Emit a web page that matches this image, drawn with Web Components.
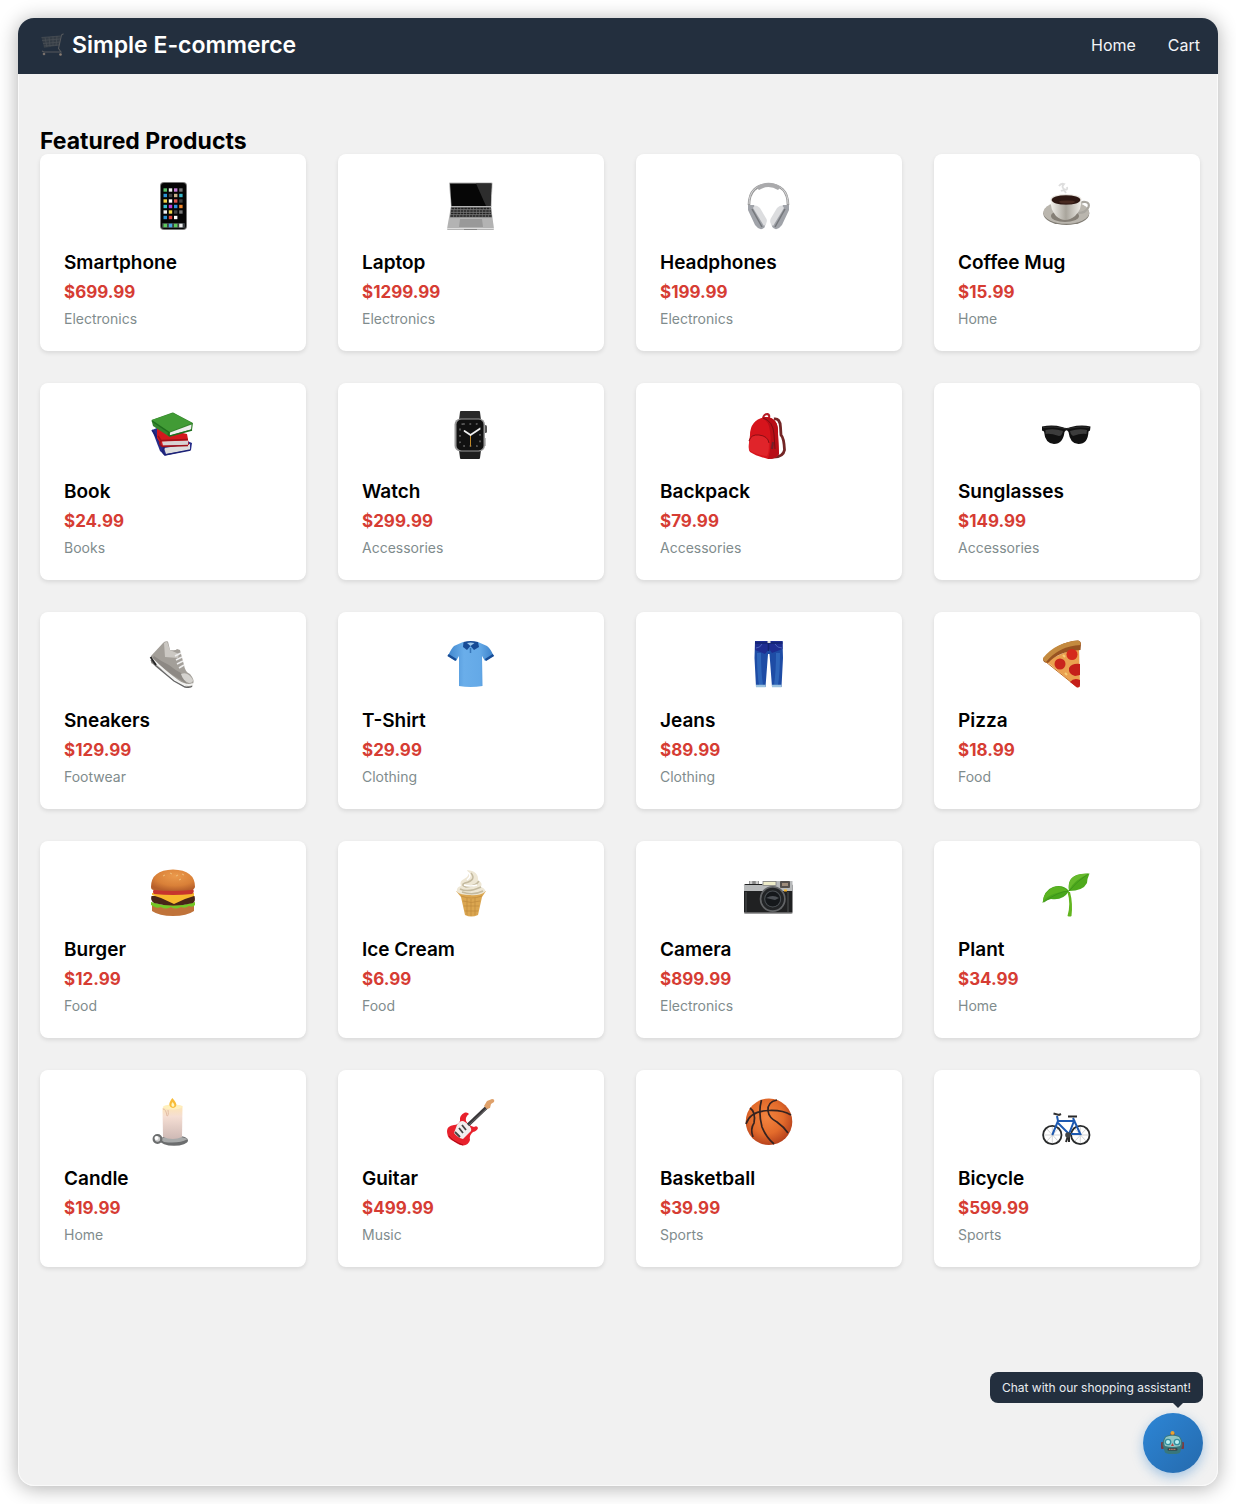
<!DOCTYPE html>
<html lang="en">
<head>
<meta charset="UTF-8">
<meta name="viewport" content="width=device-width, initial-scale=1.0">
<title>Simple E-commerce</title>
<style>
    * { box-sizing: border-box; }
    body {
        margin: 0;
        background: #fff;
        font-family: Inter, "Liberation Sans", sans-serif;
        color: #000;
    }
</style>
</head>
<body>
<shop-window>
    <shop-header slot="header">
        Simple E-commerce
        <a slot="nav" href="#home">Home</a>
        <a slot="nav" href="#cart">Cart</a>
    </shop-header>
    <product-grid heading="Featured Products"></product-grid>
    <chat-launcher slot="chat">Chat with our shopping assistant!</chat-launcher>
</shop-window>

<script>
// Icon drawings, all on a 56x56 canvas
const ICONS = {
    phone: `
        <rect x="15" y="4" width="27" height="48" rx="4" fill="#777"/>
        <rect x="16" y="5" width="25" height="46" rx="3" fill="#050505"/>
        <g stroke-width="3.4" fill="none">
            <path d="M18.5 12H22" stroke="#55c267"/><path d="M23.8 12H27.2" stroke="#eee"/><path d="M29 12H32.4" stroke="#c37bd5"/><path d="M34.2 12H37.6" stroke="#777"/>
            <path d="M18.5 17.5H22" stroke="#2a94d6"/><path d="M23.8 17.5H27.2" stroke="#444"/><path d="M29 17.5H32.4" stroke="#c9b188"/><path d="M34.2 17.5H37.6" stroke="#37b6c9"/>
            <path d="M18.5 23H22" stroke="#f0d648"/><path d="M23.8 23H27.2" stroke="#fff"/><path d="M29 23H32.4" stroke="#e0524a"/><path d="M34.2 23H37.6" stroke="#444"/>
            <path d="M18.5 28.5H22" stroke="#38bfd0"/><path d="M23.8 28.5H27.2" stroke="#c03bd0"/><path d="M29 28.5H32.4" stroke="#2c8fe0"/><path d="M34.2 28.5H37.6" stroke="#f0862a"/>
            <path d="M18.5 34H22" stroke="#eee"/><path d="M23.8 34H27.2" stroke="#f0d648"/><path d="M29 34H32.4" stroke="#444"/><path d="M34.2 34H37.6" stroke="#777"/>
            <path d="M18.5 39.5H22" stroke="#2c8fd0"/><path d="M23.8 39.5H27.2" stroke="#e0443c"/><path d="M29 39.5H32.4" stroke="#fff"/>
        </g>
        <rect x="17" y="45" width="23" height="5" rx="1" fill="#3a3f42"/>
        <path d="M18.5 47.5H22M29 47.5H32.4" stroke="#5ccb5c" stroke-width="3.6"/><path d="M23.8 47.5H27.2" stroke="#46a5e6" stroke-width="3.6"/><path d="M34.2 47.5H37.6" stroke="#eee" stroke-width="3.6"/>`,
    laptop: `
        <path d="M6 5Q6 4.5 7 4.5H48.5Q49.5 4.5 49.5 5.5L48.5 29H8Z" fill="#b5b5b5"/>
        <path d="M7 5.5H48.5L47.5 28H8.5Z" fill="#060606"/>
        <path d="M33 5.5H48.5L47.5 28H43Z" fill="#2d2d2d"/>
        <path d="M8 28H48L51 51Q51 52 50 52H5Q4 52 4 51Z" fill="#b3b3b3"/>
        <path d="M8 29H48L49 39.5H7Z" fill="#777"/>
        <path d="M8.5 30.5H47.5M8 33H48M8 35.5H48M7.5 38H48.5" stroke="#222" stroke-width="1.5" stroke-dasharray="2.6 .6"/>
        <path d="M17 41H39L40 49H16Z" fill="#999"/>
        <path d="M4 50.5H51" stroke="#ddd"/><path d="M21 51.5H34" stroke="#888"/>`,
    headphones: `
        <path d="M8 27C8 13 16 6.5 27.500 6.5S47 13 47 27" fill="none" stroke="#999" stroke-width="2.6"/>
        <path d="M8 26C8 13 16 6 27.5 6S47 13 47 26" fill="none" stroke="#d8d8da" stroke-width="1"/>
        <path d="M15 9Q27.5 .5 40 9L37 12Q27.5 6 18 12Z" fill="#aaaaac"/>
        <path d="M7 27L13 27L24 44Q25.5 50 20 51.3Q17 51 14 47L7 32Z" fill="#a0a3a9"/>
        <path d="M12 30Q14 25 19 30L25.5 41Q27 45 23 48Z" fill="#dcdddf"/>
        <path d="M11 31L21 49" stroke="#74777b" stroke-width="1.5"/>
        <path d="M48 27L42 27L31 44Q29.5 50 35 51.3Q38 51 41 47L48 32Z" fill="#a0a3a9"/>
        <path d="M43 30Q41 25 36 30L29.5 41Q28 45 32 48Z" fill="#dcdddf"/>
        <path d="M44 31L34 49" stroke="#74777b" stroke-width="1.5"/>`,
    mug: `
        <ellipse cx="27.300" cy="35.5" rx="23" ry="11.5" fill="#817d75"/>
        <ellipse cx="27.300" cy="34.5" rx="23" ry="11.3" fill="#bab6ae"/>
        <ellipse cx="26" cy="38" rx="14" ry="6" fill="#857f76"/>
        <path d="M40 28Q42 23 46.5 24Q51 25 49.5 29Q47 35 39 35" fill="none" stroke="#a9a69f" stroke-width="2.2"/>
        <path d="M11.7 22Q11 31 17 38Q26 46 36 38Q43 31 42.3 22Z" fill="url(#mugBody)"/>
        <defs><linearGradient id="mugBody"><stop stop-color="#f4f2ed"/><stop offset=".5" stop-color="#a9a59c"/><stop offset="1" stop-color="#efede8"/></linearGradient></defs>
        <ellipse cx="27" cy="21.5" rx="15.5" ry="5.5" fill="#e9e6e0"/>
        <ellipse cx="27" cy="22" rx="14.3" ry="4.8" fill="#2d1712"/>
        <ellipse cx="28" cy="24" rx="8" ry="1.6" fill="#482a21"/>
        <path d="M20 8Q22 5 25 6Q22 9 25 11Q29 13 28 9M22 13Q25 11 27 15" fill="none" stroke="#c6c6c6" stroke-width="1.8" opacity=".6"/>`,
    books: `
        <path d="M7 23L12 21L47 36L46 43L20 48.5L15 44Z" fill="#272d8a"/>
        <path d="M19 41L45 37L45 43L21 47Z" fill="#ddd"/>
        <path d="M7 23L19 41Q16 45 20 48L45.5 43" fill="none" stroke="#1c2277" stroke-width="1.6"/>
        <path d="M12 20L42 27L44 38L17 39L12 31Z" fill="#d3191d"/>
        <path d="M17 34.5L43 33.5L43 38L18 38.5Z" fill="#d8d2d2"/>
        <path d="M13 29L16 33.5L43 32.5M16 34Q13 37 17 39.5L43 38.5" fill="none" stroke="#a11117" stroke-width="1.4"/>
        <path d="M6.5 13L27.5 5.5Q29 5.5 30 6.5L48 16L47 23L24 29.500L8 19Z" fill="#35852d"/>
        <path d="M7 13L28 6L47 16L24 25Z" fill="#419b35"/>
        <path d="M25 25.5L46.5 17.5L46 22.5L25 28.500Z" fill="#eee"/>
        <path d="M7 14L24 25.5Q22 28 25 29L47 23" fill="none" stroke="#1f6f1d" stroke-width="1.5"/>`,
    watch: `
        <path d="M17 5Q17 4 18 4H36Q37 4 37 5L38 13H16Z" fill="#292929"/>
        <path d="M16 43H38L37 51Q37 52 36 52H18Q17 52 17 51Z" fill="#1e1e1e"/>
        <rect x="41" y="18" width="3" height="8" rx="1.5" fill="#555"/><path d="M42 31V39" stroke="#aaa" stroke-width="1.5"/>
        <rect x="11.500" y="11.5" width="30.5" height="33" rx="6" fill="#999"/>
        <rect x="13.500" y="12.5" width="27" height="31" rx="5" fill="#111"/>
        <rect x="17" y="17" width="20" height="22" rx="3" fill="none" stroke="#666" stroke-width="1.6" stroke-dasharray="1.8 4.6"/>
        <path d="M27.5 28V39.5" stroke="#c38a28" stroke-width="1"/>
        <path d="M27.5 28L21.5 24M27.5 28L36.5 22" stroke="#f2f2f2" stroke-width="1.7" stroke-linecap="round"/>`,
    backpack: `
        <path d="M33 12Q39 11 39.500 20L40 28Q43 31 43.5 43Q42 51 30 50" fill="none" stroke="#732626" stroke-width="2.8"/>
        <path d="M22 11Q23 7 26.5 7Q29 8 28 11" fill="none" stroke="#b51b24" stroke-width="2"/>
        <path d="M9 28Q9 13 24 10Q38 10 37 27L38 47Q35 52 27 52Q15 49 9 45Q7 43 8 36Z" fill="#d6141c"/>
        <path d="M24 10Q38 10 37 27L38 47Q35 52 27 52Q31 38 29 24Q28 14 21 11Z" fill="#b80e17"/>
        <path d="M22 11Q32 14 33 27L34 42" fill="none" stroke="#7d0c12" stroke-width="1"/>
        <path d="M8 34Q10 27 18 28Q27 29 28 36Q28 46 26 49Q15 48 8 43Z" fill="#e0242a"/>
        <path d="M8 34Q10 27 18 28Q27 29 28 36" fill="none" stroke="#8b0e14" stroke-width="1"/>
        <path d="M32 35L31 42" stroke="#702029" stroke-width="2"/>`,
    sunglasses: `
        <path d="M3 19.5Q14 17.5 23 20Q27.5 22 32 20Q42 17.5 51.5 19.5L51 23.5L49.5 24.5Q49 37 39.5 37Q31 37 29.5 25Q27.5 21.5 25.5 25Q24 37 15 37Q6 36.5 5 24.5L3 23.5Z" fill="#111"/>
        <path d="M6.5 23Q15 21 24 24Q23 29 20 29Q11 26 6.5 27ZM31 24Q40 21 48 23L47.5 27Q42 26 34 29Q31 27 31 24Z" fill="#3c3c3c"/>
        <path d="M4 20.5Q15 19 23 21Q27.5 23 32 21Q41 19 50 20.5" fill="none" stroke="#2c2c2c" stroke-width="1"/>`,
    sneakers: `
        <path d="M6 20L18 7Q20 4.5 23 5.5L25 14Q31 15 32 13L35 14L39 29Q40 36 45 38Q50 44 48 48Q47 52 43 51L6 27Z" fill="#a39f99"/>
        <path d="M19 7L22 5.5L25 14L34 18L33 22L20 21Z" fill="#cbc8c3"/>
        <path d="M9 20Q17 26 24 29Q30 34 36 37L42 48L26 38L7 23Z" fill="#8d8984"/>
        <path d="M36 38Q43 35 48 44Q48 47 44 47Q38 45 36 38Z" fill="#d4d2ce"/>
        <path d="M30 20L36 17M31 24L37 21M32 28L38 25M34 32L39 29" stroke="#eee" stroke-width="1.5"/>
        <path d="M6 22Q20 36 33 45Q42 51 48 48" fill="none" stroke="#f2f2f0" stroke-width="2"/>
        <path d="M6 24L11 30L29 45L40 51Q46 52 47 50" fill="none" stroke="#666" stroke-width="1.4"/>
        <path d="M5.5 21L11 29" stroke="#222" stroke-width="1.8"/>`,
    shirt: `
        <path d="M20 6L11 10Q8 13 5 20L13 25L16 20L16 50Q27.5 52 39.5 50L39 20L42 25L50.5 20Q48 13 44 10L35 6Q27.5 13 20 6Z" fill="url(#shirtBlue)"/>
        <defs><linearGradient id="shirtBlue"><stop stop-color="#4187ce"/><stop offset=".35" stop-color="#6aaeea"/><stop offset=".7" stop-color="#64a9e7"/><stop offset="1" stop-color="#3b80c9"/></linearGradient></defs>
        <path d="M5 19L13 24M50.5 19L42.5 24" stroke="#174c96" stroke-width="2.5"/>
        <path d="M20.5 6Q27.5 4 35 6L36 11L31 14L27.5 10L24 14L20 11Z" fill="#174b96"/>
        <path d="M24 7Q27.5 6 31.5 7L27.5 10Z" fill="#9ec8ec"/>
        <path d="M27.5 12V17" stroke="#3675b9" stroke-width="1.5"/>`,
    jeans: `
        <path d="M14 5H41.5L42 22L40.5 51H31L28.5 18H27L24.5 51H15L13.5 22Z" fill="#1e4ca5"/>
        <path d="M14 5H41.5V13L31 17L28 13L24 18L14 14Z" fill="#1e2d91"/>
        <path d="M18 17Q18 37 20 49M37 17Q37 37 35 49" fill="none" stroke="#3470c2" stroke-width="4" opacity=".7"/>
        <path d="M14 7H41.5M27.5 7V15" stroke="#132470" stroke-width="1.5"/>
        <path d="M15 12Q19 12 21 8M41 12Q36 12 34 8" fill="none" stroke="#4a62b8"/>
        <path d="M15 50H24.5M31 50H40.5" stroke="#9bc2df" stroke-width="2.6"/>
        <path d="M26.5 6H29.5" stroke="#ddd" stroke-width="2"/>`,
    pizza: `
        <path d="M7 25L40 10L41 49Q41 52 38 51Z" fill="#eaa04f"/>
        <path d="M4 23Q18 6 39 4.5Q42 5 42 8L41.5 14Q20 15 9 27Q4 27 4 23Z" fill="#985321"/>
        <path d="M4 22Q17 6 39 4.5Q42 5 41.5 9Q20 10 7 26Q4 25 4 22Z" fill="#c48a3f"/>
        <path d="M7 26L38 51" stroke="#c57022" stroke-width="1"/>
        <circle cx="33" cy="18.5" r="5.5" fill="#d52a1c"/><circle cx="21" cy="28" r="5.5" fill="#c9251c"/>
        <path d="M41 28Q33 27 30 32Q29 38 36 40L41 39ZM41 44Q35 41 31 46L38 51.5Q41 52 41 49Z" fill="#c51f1a"/>
        <path d="M26 21L24 19M28 39L26 37" stroke="#f6cc75" stroke-width="2"/>`,
    burger: `
        <path d="M7 40H49V46Q42 51 28 51Q14 51 7 46Z" fill="#c0733a"/>
        <path d="M6 37Q28 44 50 37L50 40Q48 43 44 41Q40 44 36 42Q30 45 26 42Q20 45 16 42Q11 44 8 41L6 40Z" fill="#73c625"/>
        <path d="M6.5 31H49.5Q51 36 48 38Q28 43 9 38Q5 35 6.5 31Z" fill="#482518"/>
        <path d="M7 28H49V31L40 34L29 39L16 33L7 30Z" fill="#f8b82d"/>
        <path d="M9 24H48Q50 27 47 29Q28 31 9 29Q7 27 9 24Z" fill="#c7352d"/>
        <path d="M6 22Q6 5 28 4.5Q50 5 50 22Q49 25 46 25Q28 27 9 25Q6 25 6 22Z" fill="url(#bun)"/>
        <defs><radialGradient id="bun" cx=".55" cy=".3" r=".7"><stop stop-color="#eb9a4c"/><stop offset=".65" stop-color="#d98038"/><stop offset="1" stop-color="#b65f2b"/></radialGradient></defs>
        <path d="M18 11L20 10M25 8L27 9M31 11L33 10M37 9L39 10M34 15L36 14" stroke="#f0bf7a"/>`,
    icecream: `
        <path d="M13 26Q28 33 43 26L39 32L35 50Q28 53 22 50L18 32Z" fill="#dba650"/>
        <path d="M18 31Q28 35 39 31M20 36Q28 39 37 36M21 41H36M22 46H35M24 33V50M28 34V51M32 33V50" fill="none" stroke="#be8a3c" stroke-width=".7"/>
        <path d="M24 5Q36 6 35 16Q40 17 38 22Q43 24 42 27Q36 31 27 30Q17 30 14 27Q13 22 18 21Q16 16 21 14Q28 11 24 5Z" fill="#eee7d5"/>
        <path d="M28 8Q34 15 22 18Q17 20 23 22Q33 21 36 16M17 24Q25 28 38 22M19 27Q30 31 40 26" fill="none" stroke="#c4ba9f" stroke-width="1.5"/>
        <path d="M24 7Q30 10 24 15M21 20Q27 22 34 20" fill="none" stroke="#fff" stroke-width="1.5"/>`,
    camera: `
        <path d="M8 16H18V20H8Z" fill="#888"/><path d="M10 16V20M16 16V20" stroke="#ccc" stroke-width="2.5"/>
        <rect x="3" y="19" width="48.5" height="29.5" rx="1.5" fill="#202122"/>
        <path d="M3 20H21L23 16H51.5V26H3Z" fill="#b8babb"/>
        <rect x="22" y="16.5" width="13" height="4" fill="#eeecc9" stroke="#777" stroke-width=".7"/>
        <rect x="39" y="16" width="10" height="7" rx="1" fill="#55504d"/><path d="M41 18H47V21H41Z" fill="#9e8c7b"/>
        <path d="M5 27V47M47 27V47" stroke="#37393a" stroke-width="2"/>
        <circle cx="31.700" cy="34" r="13" fill="#636567"/><circle cx="31.700" cy="34" r="11.3" fill="#222426"/>
        <circle cx="31.700" cy="34" r="8.5" fill="#4d5256"/><circle cx="31.700" cy="34" r="7.5" fill="#15181b"/>
        <path d="M25 33Q32 29 38 33L34 35Z" fill="#4c5055"/>
        <path d="M43 25.5H46" stroke="#f5b52b" stroke-width="2"/><path d="M3 48H51.5" stroke="#aaa"/>`,
    plant: `
        <path d="M28.5 27Q32 39 28.5 51Q31 52 32.5 51Q34 38 31 27Z" fill="#62b51f"/>
        <path d="M30 26Q24 36 12 34Q7 35 3.5 38Q5 25 14 22Q24 19 30 26Z" fill="#48a61c"/>
        <path d="M4 37Q9 28 29 26Q18 17 9 26Q4 30 4 37Z" fill="#5bb322"/>
        <path d="M30 26Q28 13 38 10Q44 8 50.5 8.5Q48 14 48 18Q44 26 30 26Z" fill="#4ea91c"/>
        <path d="M30 25Q36 14 50 9Q37 8 32 14Q29 19 30 25Z" fill="#66ba2c"/>
        <path d="M30 26Q20 26 5 37M30 26Q37 17 49 9" fill="none" stroke="#3b8f1a" stroke-width=".8"/>`,
    candle: `
        <ellipse cx="29" cy="46.5" rx="14" ry="5.2" fill="#6b6d6e"/><path d="M15 45Q28 39 43 45Q34 50 19 48Z" fill="#a8aaaa"/>
        <circle cx="12.500" cy="45" r="3.8" fill="#ccc" stroke="#6b6d6e" stroke-width="2.3"/><circle cx="11.500" cy="44" r="2" fill="#fff"/>
        <path d="M17.5 14Q27 8 37.5 12L37 43Q28 47 18 43Z" fill="url(#wax)"/>
        <defs><linearGradient id="wax" x2="0" y2="1"><stop stop-color="#ffe6ad"/><stop offset=".35" stop-color="#f5ded3"/><stop offset="1" stop-color="#ceb9b5"/></linearGradient></defs>
        <ellipse cx="27.500" cy="13" rx="9.5" ry="2.5" fill="#fff0bd"/>
        <path d="M18 15Q21 15 22 22Q24 22 23 16" fill="none" stroke="#e3bda5"/>
        <path d="M27.3 4Q35 12 28 14Q21 12 27.3 4Z" fill="#f8bc38"/><path d="M27.5 8Q31 12 28 13Q25 12 27.5 8Z" fill="#fff7bd"/>`,
    guitar: `
        <path d="M4 37Q4 32 11 31Q15 31 17 27Q16 21 22 18.5Q25 18 26 20Q22 23 23 27Q25 31 31 33Q34 31 35 34Q34 37 30 38Q26 41 27 46Q25 53 17 51Q10 47 7 45Q4 42 4 37Z" fill="#e8212c"/>
        <path d="M14 31Q18 25 22 28Q29 32 28 37L20 45Q15 44 11 39Z" fill="#f1eeee"/>
        <path d="M25 31L45 12" stroke="#383638" stroke-width="3.5"/>
        <path d="M26 31L44 14" stroke="#8c8889" stroke-width=".6"/>
        <path d="M41 12L44 7L49 5Q52 5 51 8L48 10L47 14L44 15Z" fill="#dfa16a"/>
        <path d="M16 34L20 39M19 31L23 36M12 38L17 43" stroke="#444" stroke-width="1.8"/>
        <path d="M6 42Q9 47 20 51" fill="none" stroke="#a90b19"/>`,
    basketball: `
        <circle cx="28" cy="27.700" r="23.3" fill="url(#ball)"/>
        <defs><radialGradient id="ball" cx=".45" cy=".4" r=".6"><stop stop-color="#f4843f"/><stop offset=".6" stop-color="#e36b2b"/><stop offset="1" stop-color="#b8431d"/></radialGradient></defs>
        <g fill="none" stroke="#362320" stroke-width="1.7"><path d="M5 30Q9 17 28 16.500Q42 16 50 21"/><path d="M20.500 6Q17 18 21 33Q25 43 33 50"/><path d="M36 6Q26 8 27 17Q28 24 36 28Q43 33 47 39"/><path d="M9 14Q15 18 13 29Q9 35 12 43"/></g>`,
    bicycle: `
        <g fill="none"><circle cx="13.300" cy="41" r="9.2" stroke="#292b2c" stroke-width="1.8"/><circle cx="41.300" cy="41" r="9.2" stroke="#292b2c" stroke-width="1.8"/>
        <g stroke="#b7babc" stroke-width=".6"><path d="M5 41H21M13.3 33V49M8 35L19 47M19 35L8 47M33 41H49M41.3 33V49M36 35L47 47M47 35L36 47"/></g>
        <path d="M13.3 41L19 27L18 22M19 27H35L30 40L19 29M30 40H41.3L34 24" stroke="#1d59b1" stroke-width="2"/>
        <path d="M14.5 19.5L20 21L22 20" stroke="#333" stroke-width="2"/>
        <path d="M29 22.5L38 22.5M28 40L32 40M29 42L27 48M30 43V48" stroke="#292929" stroke-width="2"/></g>
        <circle cx="29" cy="41" r="2.8" fill="#424547"/>`
};

const PRODUCTS = [
    ['phone', 'Smartphone', '$699.99', 'Electronics'],
    ['laptop', 'Laptop', '$1299.99', 'Electronics'],
    ['headphones', 'Headphones', '$199.99', 'Electronics'],
    ['mug', 'Coffee Mug', '$15.99', 'Home'],
    ['books', 'Book', '$24.99', 'Books'],
    ['watch', 'Watch', '$299.99', 'Accessories'],
    ['backpack', 'Backpack', '$79.99', 'Accessories'],
    ['sunglasses', 'Sunglasses', '$149.99', 'Accessories'],
    ['sneakers', 'Sneakers', '$129.99', 'Footwear'],
    ['shirt', 'T-Shirt', '$29.99', 'Clothing'],
    ['jeans', 'Jeans', '$89.99', 'Clothing'],
    ['pizza', 'Pizza', '$18.99', 'Food'],
    ['burger', 'Burger', '$12.99', 'Food'],
    ['icecream', 'Ice Cream', '$6.99', 'Food'],
    ['camera', 'Camera', '$899.99', 'Electronics'],
    ['plant', 'Plant', '$34.99', 'Home'],
    ['candle', 'Candle', '$19.99', 'Home'],
    ['guitar', 'Guitar', '$499.99', 'Music'],
    ['basketball', 'Basketball', '$39.99', 'Sports'],
    ['bicycle', 'Bicycle', '$599.99', 'Sports']
];

class ShopWindow extends HTMLElement {
    connectedCallback() {
        this.attachShadow({ mode: 'open' });
        this.shadowRoot.innerHTML = `
            <style>
                :host {
                    display: flow-root;
                }
                .frame {
                    position: relative;
                    box-sizing: border-box;
                    min-height: calc(100vh - 36px);
                    margin: 18px;
                    background: #f1f1f1;
                    border-radius: 16px;
                    box-shadow: 0 2px 20px rgba(0, 0, 0, 0.32), inset 0 0 0 1px #fafafa;
                }
                main {
                    padding: 54px 18px 48px 22px;
                }
            </style>
            <div class="frame">
                <slot name="header"></slot>
                <main><slot></slot></main>
                <slot name="chat"></slot>
            </div>
        `;
    }
}

class ShopHeader extends HTMLElement {
    connectedCallback() {
        this.attachShadow({ mode: 'open' });
        this.shadowRoot.innerHTML = `
            <style>
                :host {
                    display: block;
                }
                header {
                    display: flex;
                    align-items: center;
                    justify-content: space-between;
                    padding: 12px 18px 14px 22px;
                    background: #232f3e;
                    color: #fff;
                    border-radius: 16px 16px 0 0;
                }
                h1 {
                    display: flex;
                    align-items: center;
                    gap: 8px;
                    margin: 0;
                    font-size: 23px;
                    font-weight: 600;
                    line-height: 30px;
                }
                svg {
                    width: 24px;
                    height: 24px;
                }
                nav {
                    display: flex;
                    gap: 32px;
                }
                ::slotted(a) {
                    color: #f3f5f7;
                    font-size: 16px;
                    line-height: 24px;
                    text-decoration: none;
                }
            </style>
            <header>
                <h1>
                    <svg viewBox="0 0 24 24" fill="none" aria-hidden="true">
                        <path d="M1.5 4.5L20.5 3L19 12.5L4 15Z" fill="#343c45"/>
                        <path d="M1.5 4.5L20.5 3M2 7.5L20 6M3 10.5L20 9M4 13L19 12M5 4.5L7 14M9 4L10 13.5M13 3.5V13M17 3L16 13" stroke="#4c5258" stroke-width=".7"/>
                        <path d="M23.5 .8L21.5 2L18.5 15.5L21 19H4L2 18" stroke="#56595c" stroke-width="1.1"/>
                        <circle cx="4" cy="21" r="1.3" fill="#77706b"/><circle cx="20.500" cy="21.5" r="1.3" fill="#8a7d72"/>
                    </svg>
                    <span><slot></slot></span>
                </h1>
                <nav><slot name="nav"></slot></nav>
            </header>
        `;
    }
}

class ProductCard extends HTMLElement {
    connectedCallback() {
        this.attachShadow({ mode: 'open' });
        this.shadowRoot.innerHTML = `
            <style>
                :host {
                    display: block;
                }
                article {
                    display: flex;
                    flex-direction: column;
                    gap: 6px;
                    padding: 24px;
                    background: #fff;
                    border-radius: 8px;
                    box-shadow: 0 2px 4px rgba(0, 0, 0, 0.1);
                }
                svg {
                    align-self: center;
                    width: 56px;
                    height: 56px;
                    margin-bottom: 12px;
                }
                h3, p {
                    margin: 0;
                }
                h3 {
                    font-size: 19px;
                    font-weight: 600;
                    line-height: 22px;
                }
                .price {
                    color: #d63c33;
                    font-size: 17px;
                    font-weight: 700;
                    line-height: 24px;
                }
                .category {
                    color: #7f8c8d;
                    font-size: 14px;
                    line-height: 17px;
                }
            </style>
            <article>
                <svg viewBox="0 0 56 56" aria-hidden="true">${ICONS[this.getAttribute('icon')]}</svg>
                <h3><slot name="name"></slot></h3>
                <p class="price"><slot name="price"></slot></p>
                <p class="category"><slot name="category"></slot></p>
            </article>
        `;
    }
}

class ProductGrid extends HTMLElement {
    connectedCallback() {
        this.attachShadow({ mode: 'open' });
        this.shadowRoot.innerHTML = `
            <style>
                :host {
                    display: block;
                }
                h2 {
                    margin: 0;
                    font-size: 23px;
                    font-weight: 700;
                    line-height: 26px;
                }
                .grid {
                    display: grid;
                    grid-template-columns: repeat(auto-fill, minmax(250px, 1fr));
                    gap: 32px;
                }
            </style>
            <h2>${this.getAttribute('heading')}</h2>
            <div class="grid">
                ${PRODUCTS.map(([icon, name, price, category]) => `
                    <product-card icon="${icon}">
                        <span slot="name">${name}</span>
                        <span slot="price">${price}</span>
                        <span slot="category">${category}</span>
                    </product-card>
                `).join('')}
            </div>
        `;
    }
}

class ChatLauncher extends HTMLElement {
    connectedCallback() {
        this.attachShadow({ mode: 'open' });
        this.shadowRoot.innerHTML = `
            <style>
                /* floats over the bottom right corner of the window */
                :host {
                    position: absolute;
                    right: 15px;
                    bottom: 13px;
                    display: flex;
                    flex-direction: column;
                    align-items: flex-end;
                    gap: 10px;
                }
                .tooltip {
                    position: relative;
                    padding: 6px 12px;
                    background: #232f3e;
                    border-radius: 8px;
                    color: #e9edf1;
                    font-size: 12px;
                    line-height: 19px;
                    white-space: nowrap;
                }
                .tooltip::after {
                    content: "";
                    position: absolute;
                    top: 100%;
                    right: 20px;
                    border: 5px solid transparent;
                    border-top-color: #232f3e;
                    border-bottom: 0;
                }
                button {
                    display: flex;
                    align-items: center;
                    justify-content: center;
                    width: 60px;
                    height: 60px;
                    padding: 0;
                    border: 0;
                    border-radius: 50%;
                    background: linear-gradient(135deg, #2d86d6, #256aad);
                    box-shadow: 0 4px 12px rgba(49, 130, 206, 0.4);
                }
                svg {
                    width: 24px;
                    height: 24px;
                }
            </style>
            <div class="tooltip" id="tip"><slot></slot></div>
            <button type="button" aria-labelledby="tip">
                <svg viewBox="0 0 24 24" aria-hidden="true">
                    <rect x="0" y="11" width="3" height="7" rx="1" fill="#7a3a42"/><rect x="20" y="11" width="3" height="7" rx="1" fill="#7a3a42"/>
                    <path d="M9.500 2H13.500V6H9.500Z" fill="#8b3c35"/><circle cx="11.500" cy="2" r="2" fill="#eaa32f"/>
                    <path d="M5 5Q11.5 2.5 18 5Q21.500 8 21.500 14L19 21.500Q17 23 11.5 23Q6 23 4 21.500L1.500 14Q1.500 8 5 5Z" fill="#38777c"/>
                    <path d="M5 6Q11.5 3.5 18 6Q21 10 19 15Q11.5 17 4 15Q2 10 5 6Z" fill="#8fc6c6"/>
                    <circle cx="7" cy="11" r="2.7" fill="#b9f0f2" stroke="#328e9f" stroke-width="1.3"/><circle cx="16" cy="11" r="2.7" fill="#b9f0f2" stroke="#328e9f" stroke-width="1.3"/>
                    <path d="M11.5 12L13 15H10Z" fill="#bd4340"/>
                    <rect x="6.500" y="17" width="10" height="2.8" rx="1.2" fill="#334a4f"/><path d="M8 18.4H15" stroke="#c17e68" stroke-width="1.3" stroke-dasharray="1.5 .7"/>
                </svg>
            </button>
        `;
    }
}

customElements.define('product-card', ProductCard);
customElements.define('product-grid', ProductGrid);
customElements.define('shop-header', ShopHeader);
customElements.define('chat-launcher', ChatLauncher);
customElements.define('shop-window', ShopWindow);
</script>
</body>
</html>
